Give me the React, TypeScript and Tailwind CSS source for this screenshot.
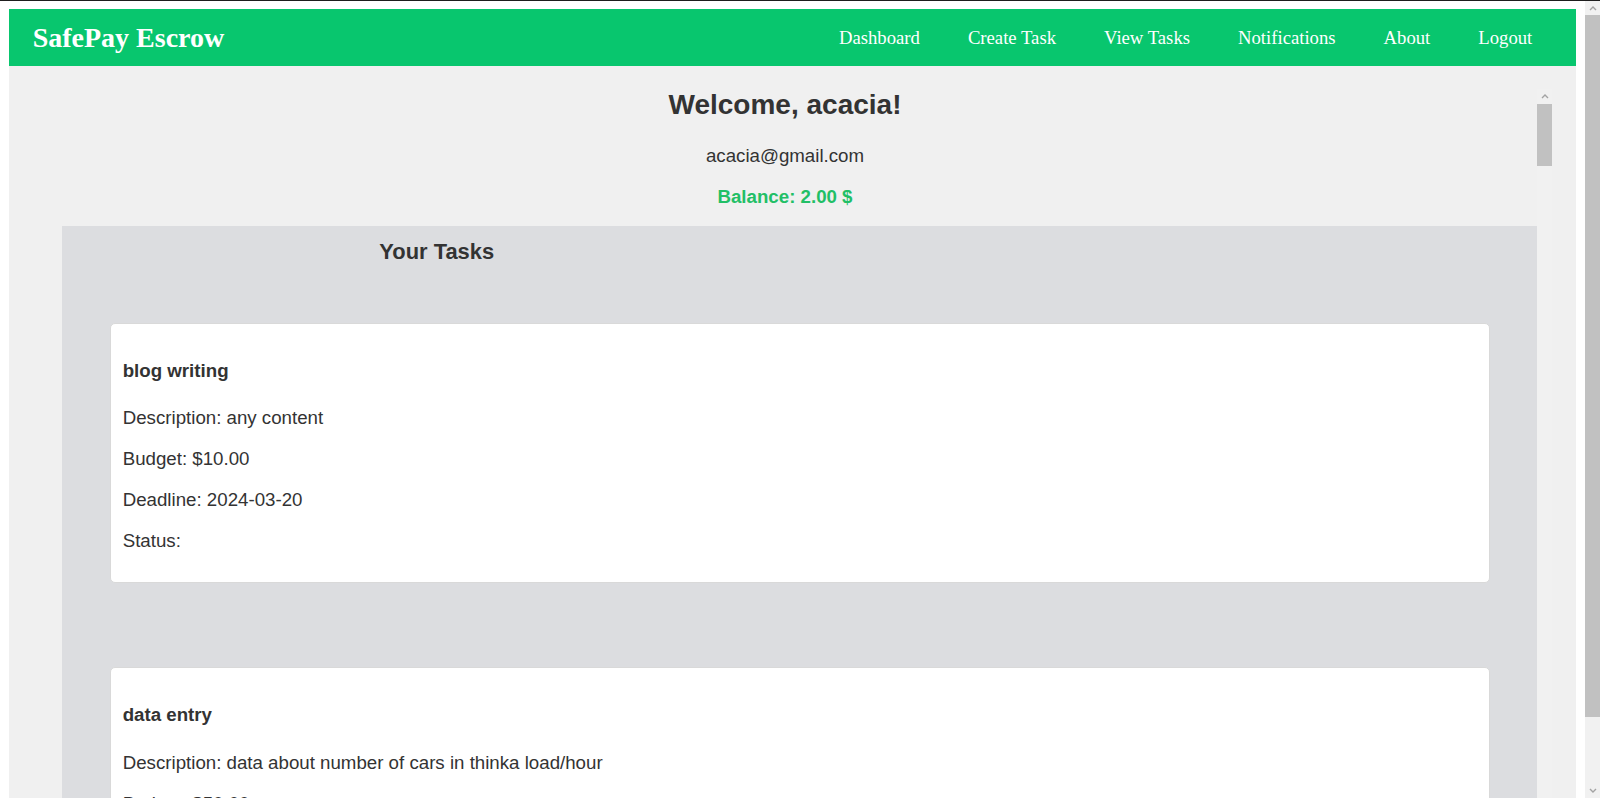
import React from 'react';

type Task = { title: string; description: string; budget: string; deadline: string; status: string };

const tasks: Task[] = [
  { title: 'blog writing', description: 'any content', budget: '10.00', deadline: '2024-03-20', status: '' },
  { title: 'data entry', description: 'data about number of cars in thinka load/hour', budget: '50.00', deadline: '2024-03-25', status: '' },
];

const links = ['Dashboard', 'Create Task', 'View Tasks', 'Notifications', 'About', 'Logout'];

function Chevron({ up }: { up?: boolean }) {
  return (
    <svg width="8" height="6" viewBox="0 0 8 6" className="text-[#a3a3a3]">
      <polyline points={up ? '1,5 4,2 7,5' : '1,1 4,4 7,1'} fill="none" stroke="currentColor" strokeWidth="1.4" />
    </svg>
  );
}

// classic scrollbar drawn by hand (headless browser hides the real one)
function Scrollbar({ arrow, thumb }: { arrow: string; thumb: string }) {
  return (
    <div className="flex w-[15px] shrink-0 flex-col bg-[#f1f1f1]">
      <div className={`flex ${arrow} items-center justify-center`}><Chevron up /></div>
      <div className={`${thumb} bg-[#c1c1c1]`} />
      <div className="flex-1" />
      <div className="flex h-[15px] items-center justify-center"><Chevron /></div>
    </div>
  );
}

function TaskCard({ task }: { task: Task }) {
  return (
    <div className="mx-[47.7px] rounded-[5px] border border-[#d9d9d9] bg-white px-[11.7px] pt-[35.8px] pb-[30px] text-[18.7px] leading-[21.5px]">
      <h4 className="font-bold">{task.title}</h4>
      <p className="mt-[26.1px]">Description: {task.description}</p>
      <p className="mt-[19.5px]">Budget: ${task.budget}</p>
      <p className="mt-[19.5px]">Deadline: {task.deadline}</p>
      <p className="mt-[19.5px]">Status: {task.status}</p>
    </div>
  );
}

export default function App() {
  return (
    <div className="flex h-[798px] overflow-hidden border-t border-[#1e1e1e] bg-white">
      <div className="min-w-0 flex-1 px-[9.33px] pt-[8.33px]">
        {/* top bar */}
        <nav className="flex h-[56.3px] items-center justify-between bg-[#08c66e] pl-[23.3px] pr-[43.4px] pt-[2px] text-white [font-family:'Liberation_Serif',serif]">
          <div className="text-[28px] font-bold">SafePay Escrow</div>
          <ul className="flex gap-[48px] text-[18.7px]">
            {links.map(l => <li key={l}><a href="#">{l}</a></li>)}
          </ul>
        </nav>

        <main className="flex h-[798px] bg-[#f0f0f0] p-[23.3px]">
          <div className="min-w-0 flex-1 overflow-hidden text-[#333] [font-family:'Liberation_Sans',Arial,sans-serif]">
            <h2 className="text-center text-[28px] font-bold leading-[32.2px]">Welcome, acacia!</h2>
            <p className="mt-[23.6px] text-center text-[18.7px] leading-[21.5px]">acacia@gmail.com</p>
            <p className="mt-[19.5px] text-center text-[18.7px] font-bold leading-[21.5px] text-[#22bf66]">Balance: 2.00 $</p>

            <section className="mt-[18.7px] ml-[29.7px] bg-[#dcdde0] pt-[13.2px] pb-[40px]">
              <h3 className="pl-[317px] text-[21.9px] font-bold leading-[25.2px]">Your Tasks</h3>
              <div className="mt-[58.6px] flex flex-col gap-[84.4px]">
                {tasks.map((t, i) => <TaskCard key={i} task={t} />)}
              </div>
            </section>
          </div>
          <Scrollbar arrow="h-[15px]" thumb="h-[62px]" />
        </main>
      </div>
      <Scrollbar arrow="h-[14px]" thumb="h-[702px]" />
    </div>
  );
}
